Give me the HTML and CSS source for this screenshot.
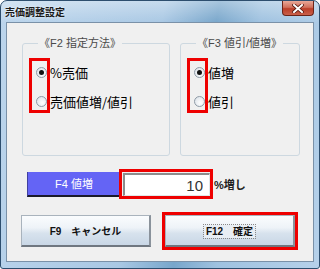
FILE: index.html
```html
<!DOCTYPE html>
<html lang="ja">
<head>
    <meta charset="UTF-8">
    <title>売価調整設定</title>
    <link rel="stylesheet" href="styles.css">
</head>
<body>

<div class="window">
    <div class="titlebar">
        <span class="title">売価調整設定</span>
        <button class="close">
            <svg width="12" height="9" viewBox="0 0 12 9">
                <path d="M2 1 L10 8 M10 1 L2 8" stroke="#5a1a10" stroke-width="3.6" stroke-linecap="square"/>
                <path d="M2 1 L10 8 M10 1 L2 8" stroke="#fff" stroke-width="2" stroke-linecap="square"/>
            </svg>
        </button>
    </div>

    <div class="client">
        <div class="groups">
            <fieldset class="group group-method">
                <legend>《F2 指定方法》</legend>
                <label class="opt"><input type="radio" name="method" checked><span>%売価</span></label>
                <label class="opt"><input type="radio" name="method"><span>売価値増/値引</span></label>
                <div class="mark"></div>
            </fieldset>
            <fieldset class="group group-dir">
                <legend>《F3 値引/値増》</legend>
                <label class="opt"><input type="radio" name="dir" checked><span>値増</span></label>
                <label class="opt"><input type="radio" name="dir"><span>値引</span></label>
                <div class="mark"></div>
            </fieldset>
        </div>

        <div class="rate-row">
            <div class="key-box">F4 値増</div>
            <div class="mark-box rate-mark"><input class="rate" type="text" value="10"></div>
            <span class="unit">%増し</span>
        </div>

        <div class="actions">
            <button class="btn">F9　キャンセル</button>
            <div class="mark-box">
                <button class="btn"><span class="focus">F12　確定</span></button>
            </div>
        </div>
    </div>
</div>

</body>
</html>
```

FILE: styles.css
```css
body {
    margin: 0;
    font-family: "Liberation Sans", "Noto Sans CJK JP", sans-serif;
    background: #fff;
}
.window {
    width: 320px;
    height: 269px;
    box-sizing: border-box;
    border: 1px solid #2d4e6e;
    border-radius: 7px 7px 3px 3px;
    background:
        linear-gradient(180deg, rgba(255,255,255,0.35), rgba(255,255,255,0) 22px),
        linear-gradient(100deg, #bcd5ec 0%, #a9c8e4 45%, #78a6cb 60%, #9fc2e0 72%, #b6d1ea 100%);
    padding: 0 5px 6px;
    display: flex;
    flex-direction: column;
    position: relative;
}
.titlebar {
    height: 21px;
    display: flex;
    align-items: center;
}
.title {
    font-size: 10px;
    font-weight: bold;
    margin-left: -1px;
    margin-top: -1px;
    color: #1a1a1a;
    text-shadow: 0 0 3px rgba(255,255,255,0.9);
}
.close {
    position: absolute;
    top: 0;
    right: 5px;
    width: 32px;
    height: 15px;
    padding: 0;
    border: 1px solid #6b2418;
    border-top: none;
    border-radius: 0 0 4px 4px;
    background: linear-gradient(180deg, #e9a898, #d0705c 45%, #bb3e28 55%, #c9604a);
    display: flex;
    align-items: center;
    justify-content: center;
}
.client {
    flex: 1;
    background: #f0f0f0;
    border: 1px solid #7a91a8;
    padding-top: 14px;
}
.groups {
    display: flex;
    gap: 10px;
    padding-left: 15px;
}
.group {
    position: relative;
    margin: 0;
    padding: 9px 0 0 13px;
    border: 1px solid #cdd8e0;
    border-radius: 3px;
    height: 119px;
    box-sizing: border-box;
}
.group-method { width: 148px; }
.group-dir { width: 120px; }
.group legend {
    font-size: 11px;
    line-height: 12px;
    color: #4a4a4a;
    padding: 0 1px;
    margin-left: 2px;
}
.opt {
    display: flex;
    align-items: center;
    height: 29px;
    font-family: "Noto Sans CJK JP", sans-serif;
    font-size: 13px;
    color: #000;
}
.opt input {
    appearance: none;
    width: 11px;
    height: 11px;
    margin: 0 3px 0 0;
    border: 1px solid #8e9aa6;
    border-radius: 50%;
    background: radial-gradient(circle at 60% 65%, #ffffff, #d7dee6);
    display: grid;
    place-items: center;
    box-sizing: border-box;
}
.opt input:checked::after {
    content: "";
    width: 5px;
    height: 5px;
    border-radius: 50%;
    background: #111;
}
.mark {
    position: absolute;
    left: 6px;
    top: 9px;
    width: 21px;
    height: 55px;
    box-sizing: border-box;
    border: 3px solid #ee0000;
}
.rate-row {
    display: flex;
    align-items: center;
    margin-top: 13px;
    padding-left: 20px;
}
.key-box {
    width: 93px;
    height: 25px;
    box-sizing: border-box;
    background: #6464f5;
    border-left: 1px solid #4040a0;
    border-bottom: 2px solid #1a1a2a;
    color: #fff;
    font-size: 11px;
    display: flex;
    align-items: center;
    justify-content: center;
}
.mark-box {
    border: 3px solid #ee0000;
    display: flex;
}
.rate-mark {
    margin-left: -1px;
    padding: 1px 0 0 1px;
}
.rate {
    width: 87px;
    height: 23px;
    box-sizing: border-box;
    border-top: 2px solid #8c8c8c;
    border-left: 2px solid #8c8c8c;
    border-right: 1px solid #e0e8e8;
    border-bottom: 1px solid #e0e8e8;
    background: #fff;
    text-align: right;
    font-family: "Liberation Sans", sans-serif;
    font-size: 15px;
    color: #333;
    padding: 0 6px 0 0;
    outline: none;
}
.unit {
    font-size: 11px;
    font-weight: bold;
    color: #222;
    margin-left: 1px;
}
.actions {
    display: flex;
    align-items: center;
    gap: 11px;
    margin-top: 13px;
    padding-left: 14px;
}
.btn {
    width: 130px;
    height: 32px;
    box-sizing: border-box;
    border: 1px solid #a9b3bd;
    border-bottom: 2px solid #6f7780;
    border-right: 2px solid #8a929b;
    background: linear-gradient(180deg, #fafcfe, #eef3f8 40%, #d7e2ed 60%, #c9d7e6);
    font-family: "Liberation Sans", "Noto Sans CJK JP", sans-serif;
    font-size: 10px;
    font-weight: bold;
    color: #111;
    padding: 0;
}
.focus {
    background: #e8eef4;
    outline: 1px dotted #888;
    padding: 1px 2px;
}
```
